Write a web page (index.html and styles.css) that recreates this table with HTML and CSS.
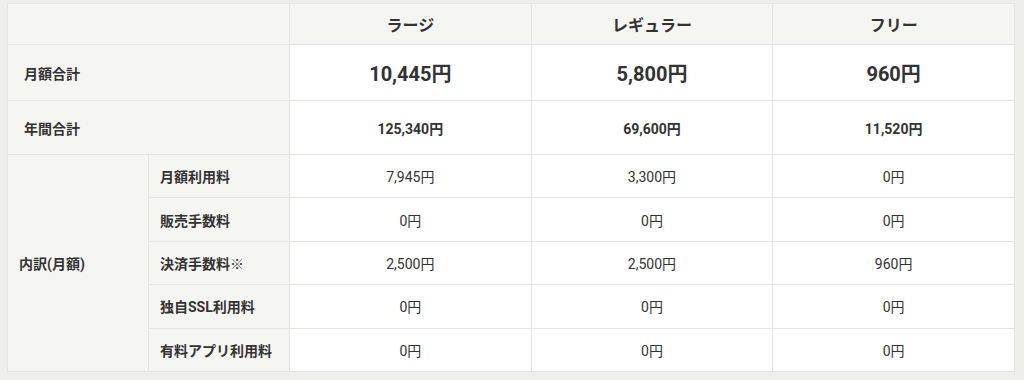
FILE: index.html
```html
<!DOCTYPE html>
<html lang="ja">
<head>
<meta charset="utf-8">
<link rel="stylesheet" href="styles.css">
</head>
<body>
<table class="price">
  <colgroup>
    <col class="c-label"><col class="c-label">
    <col class="c-data"><col class="c-data"><col class="c-data">
  </colgroup>
  <tr class="r-head">
    <th colspan="2" class="h"></th>
    <th class="h plan">ラージ</th>
    <th class="h plan">レギュラー</th>
    <th class="h plan">フリー</th>
  </tr>
  <tr class="r-month">
    <th colspan="2" class="h lab">月額合計</th>
    <td class="big">10,445円</td>
    <td class="big">5,800円</td>
    <td class="big">960円</td>
  </tr>
  <tr class="r-year">
    <th colspan="2" class="h lab">年間合計</th>
    <td class="mid">125,340円</td>
    <td class="mid">69,600円</td>
    <td class="mid">11,520円</td>
  </tr>
  <tr class="r-sub">
    <th rowspan="5" class="h lab2">内訳(月額)</th>
    <th class="h sub">月額利用料</th>
    <td>7,945円</td>
    <td>3,300円</td>
    <td>0円</td>
  </tr>
  <tr class="r-sub">
    <th class="h sub">販売手数料</th>
    <td>0円</td>
    <td>0円</td>
    <td>0円</td>
  </tr>
  <tr class="r-sub">
    <th class="h sub">決済手数料※</th>
    <td>2,500円</td>
    <td>2,500円</td>
    <td>960円</td>
  </tr>
  <tr class="r-sub">
    <th class="h sub">独自SSL利用料</th>
    <td>0円</td>
    <td>0円</td>
    <td>0円</td>
  </tr>
  <tr class="r-sub">
    <th class="h sub">有料アプリ利用料</th>
    <td>0円</td>
    <td>0円</td>
    <td>0円</td>
  </tr>
</table>
</body>
</html>
```

FILE: styles.css
```css
html, body {
  margin: 0;
  padding: 0;
  background: #eeeeea;
}
body {
  padding: 3px 0 0 7px;
  font-family: Roboto, "Noto Sans CJK JP", sans-serif;
  color: #333;
}
.price {
  width: 1007px;
  border-collapse: collapse;
  table-layout: fixed;
  background: #fff;
}
.c-label { width: 141px; }
.c-data { width: 241.67px; }
.price th, .price td {
  border: 1px solid #e4e4e0;
  padding: 0;
  text-align: center;
  vertical-align: middle;
  font-size: 14px;
  font-weight: 400;
}
.price th.h {
  background: #f5f5f1;
  font-weight: 700;
}
.price th.plan { font-size: 16px; }
.price th.lab { text-align: left; padding-left: 16px; }
.price th.lab2 { text-align: left; padding-left: 11px; }
.price th.sub { text-align: left; padding-left: 11px; }
.price td.big { font-size: 20px; font-weight: 700; }
.price td.mid { font-size: 14px; font-weight: 700; }
.r-head { height: 41px; }
.r-month { height: 56px; }
.r-year { height: 54px; }
.r-sub { height: 43.4px; }
```
